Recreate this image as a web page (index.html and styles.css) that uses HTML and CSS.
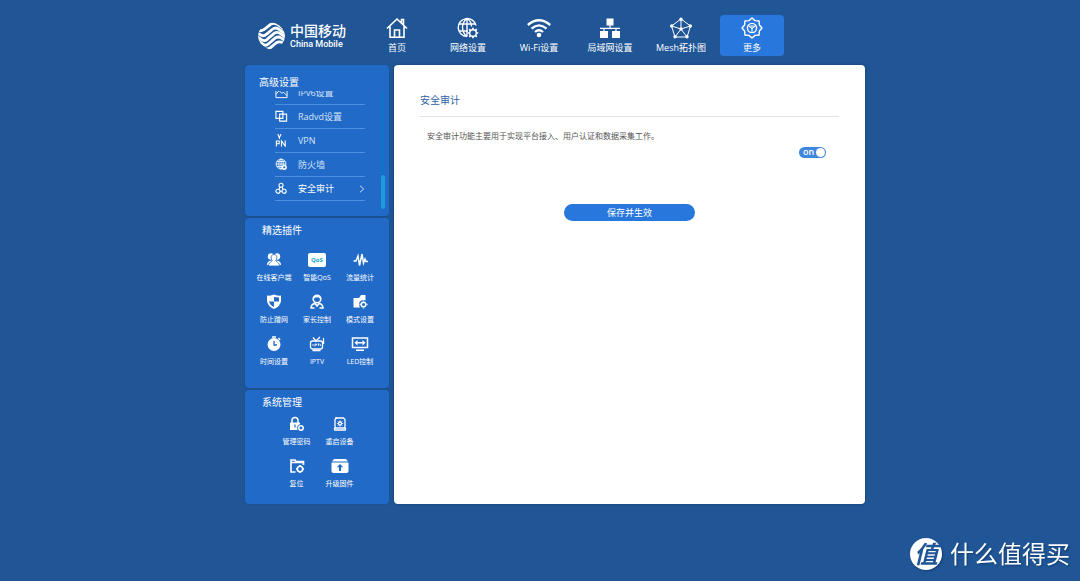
FILE: index.html
```html
<!DOCTYPE html>
<html lang="zh-CN">
<head>
<meta charset="utf-8">
<meta name="viewport" content="width=device-width, initial-scale=1">
<title>安全审计</title>
<link rel="stylesheet" href="styles.css">
</head>
<body>
<div class="page">
  <header class="header">
    <a class="brand" href="#">
      <svg class="brand-mark" viewBox="0 0 28 28" aria-hidden="true">
        <clipPath id="mark"><path d="M14 0Q18 0 22 3L25 6Q28 10 28 14T25 22L22 25Q18 28 14 28T6 25L3 22Q0 18 0 14T3 6L6 3Q10 0 14 0Z"/></clipPath>
        <g clip-path="url(#mark)" fill="none" stroke="#fff" stroke-width="2.900">
          <path d="M-2 7L2 8.500Q5 9 8 6L13 2Q17-.500 21 2.500L30 9"/>
          <path d="M-2 10L3 13Q6 15 9 12L15 7Q19 4 23 8L30 13"/>
          <path d="M-2 14L4 18Q7 20 10 17L17 11Q20 9 24 12L30 16.500"/>
          <path d="M-2 17.500L5 22.500Q8 25 11 22L18 16Q21 14 24 16L30 20"/>
          <path d="M1 24Q9 30 13 26L19 21Q22 19 26 21L30 24"/>
        </g>
      </svg>
      <span class="brand-text"><span class="brand-cn">中国移动</span><span class="brand-en">China Mobile</span></span>
    </a>
    <nav class="nav">
      <a class="nav-item" href="#">
        <svg class="nav-icon" viewBox="0 0 22 22" fill="none" stroke="#fff" stroke-width="1.600"><path d="M1 11.500L11 2l10 9.500M4 9.500V20.200h14V9.500M8.500 20v-7h5v7M15.500 5.500V2.500h2v5"/></svg>
        <span>首页</span>
      </a>
      <a class="nav-item" href="#">
        <svg class="nav-icon" viewBox="0 0 22 22" fill="none" stroke="#fff" stroke-width="1.400"><path d="M19 8.500A9 9 0 1 0 10 19.500M10 1.500C4 6 4 15 10 19.500M10 1.500v18M10 1.500c3 2 4.500 5 4.500 8M2 7h16.500M2 14h9"/><circle cx="16" cy="16" r="3.300"/><path d="M16 10.700v2M16 19.300v2M10.700 16h2M19.300 16h2M12.200 12.200l1.400 1.400M18.400 18.400l1.400 1.400M19.800 12.200l-1.400 1.400M13.600 18.400l-1.400 1.400" stroke-width="1.700"/></svg>
        <span>网络设置</span>
      </a>
      <a class="nav-item" href="#">
        <svg class="nav-icon wifi" viewBox="0 0 24 22" fill="none" stroke="#fff" stroke-width="2.300"><path d="M.800 8Q12-1.500 23.200 8M4.500 11.700Q12 5 19.500 11.700M8 15Q12 11.500 16 15"/><circle cx="12" cy="18" r="2.300" fill="#fff" stroke="none"/></svg>
        <span>Wi-Fi设置</span>
      </a>
      <a class="nav-item" href="#">
        <svg class="nav-icon" viewBox="0 0 22 22" fill="#fff"><path d="M7.500 1.500h7v7h-7zM1 14h8v7H1zM13 14h8v7h-8zM10.400 8.500h1.200v2.200H21v1.200h-3.400V14h-1.200v-2.100H5.600V14H4.400v-2.100H1v-1.200h9.400z"/></svg>
        <span>局域网设置</span>
      </a>
      <a class="nav-item" href="#">
        <svg class="nav-icon" viewBox="0 0 22 22" fill="none" stroke="#fff"><path d="M11 2L20.500 9L17 20H5L1.500 9ZM11 12V2M11 12L20.500 9M11 12L17 20M11 12L5 20M11 12L1.500 9"/><g fill="#fff" stroke="none"><circle cx="11" cy="2.200" r="1.700"/><circle cx="20.300" cy="9" r="1.700"/><circle cx="17" cy="19.800" r="1.700"/><circle cx="5" cy="19.800" r="1.700"/><circle cx="1.700" cy="9" r="1.700"/><circle cx="11" cy="12" r="1.700"/></g></svg>
        <span>Mesh拓扑图</span>
      </a>
      <a class="nav-item active" href="#" aria-current="page">
        <svg class="nav-icon" viewBox="0 0 22 22" fill="none" stroke="#fff" stroke-width="1.400" stroke-linejoin="round"><path d="M11 1L14.060 3.600 18.070 3.930 18.400 7.940 21 11 18.400 14.060 18.070 18.070 14.060 18.400 11 21 7.940 18.400 3.930 18.070 3.600 14.060 1 11 3.600 7.940 3.930 3.930 7.940 3.600Z"/><circle cx="11" cy="11" r="4.600"/><path d="M7.500 9h7L11 11.500zM11 11v4M9 9.500l2 2 2-2" stroke-width="1"/></svg>
        <span>更多</span>
      </a>
    </nav>
  </header>

  <div class="layout">
    <aside class="sidebar">
      <section class="panel settings">
        <h2 class="panel-title">高级设置</h2>
        <div class="scroller">
          <ul class="menu">
            <li><a class="menu-item" href="#"><svg class="menu-icon" viewBox="0 0 14 14" fill="none" stroke="#fff"><path d="M1 2h12v10.500H1zM1 9l3.500-4 3 3L9 6.500l4 4"/></svg><span>IPv6设置</span></a></li>
            <li><a class="menu-item" href="#"><svg class="menu-icon" viewBox="0 0 14 14" fill="none" stroke="#fff" stroke-width="1.200"><path d="M1 1.500h7.500V9H1zM5 4.500h7.500V12H5z"/></svg><span>Radvd设置</span></a></li>
            <li><a class="menu-item" href="#"><svg class="menu-icon" viewBox="0 0 14 14" fill="none" stroke="#fff" stroke-width="1.200"><path d="M3 0l1.700 4L6.500 0M4.700 4v1.500M1.500 13.500V7.500H4.500v3H1.500M7 13.500V7.500l4 5.500V7"/></svg><span>VPN</span></a></li>
            <li><a class="menu-item" href="#"><svg class="menu-icon" viewBox="0 0 14 14" fill="none" stroke="#fff" stroke-width=".9"><circle cx="6.500" cy="6.500" r="5.300"/><ellipse cx="6.500" cy="6.500" rx="2.400" ry="5.300"/><path d="M1.200 6.500h10.600M2 3.800h9M2 9.200h6M6.500 1v11"/><circle cx="10" cy="10" r="2" fill="#216ac8" stroke-width="1.600"/></svg><span>防火墙</span></a></li>
            <li><a class="menu-item current" href="#" aria-current="page"><svg class="menu-icon" viewBox="0 0 14 14" fill="none" stroke="#fff" stroke-width="1.200"><circle cx="6.500" cy="3.500" r="2.200"/><circle cx="3.200" cy="10" r="2.200"/><circle cx="9.800" cy="10" r="2.200"/><path d="M5.500 5.500L4 8M7.500 5.500L9 8M5.400 10h2.200"/></svg><span>安全审计</span><svg class="chevron" viewBox="0 0 6 8" fill="none" stroke="#cfe0f7"><path d="M1 .700L4.700 4 1 7.300"/></svg></a></li>
          </ul>
          <div class="track"><div class="thumb"></div></div>
        </div>
      </section>

      <section class="panel plugins">
        <h2 class="panel-title indent">精选插件</h2>
        <div class="tiles three">
          <a class="tile" href="#"><svg class="tile-icon" viewBox="0 0 18 18"><g fill="#fff"><circle cx="6" cy="5.500" r="3.200"/><circle cx="12" cy="5.500" r="3.200"/><path d="M2 14q0-4 4-4.500h6q4 .500 4 4.500z"/></g><path d="M9 3.500c4 0 3 4.800 1.800 6 .200 1.500 3.700 1.500 3.700 5.500h-11c0-4 3.500-4 3.700-5.500C6 8.300 5 3.500 9 3.500z" fill="#fff" stroke="#216ac8" stroke-width=".8"/></svg><span>在线客户端</span></a>
          <a class="tile" href="#"><svg class="tile-icon" viewBox="0 0 18 18"><rect y="2" width="18" height="14" rx="2" fill="#fff"/><text class="qos" x="9" y="11" text-anchor="middle">QoS</text></svg><span>智能QoS</span></a>
          <a class="tile" href="#"><svg class="tile-icon" viewBox="0 0 18 18" fill="none" stroke="#fff" stroke-width="1.500"><path d="M2.500 10H5L7 5l1.500 9.500L11 3l1.500 9L14 8l1 2.500h2"/></svg><span>流量统计</span></a>
          <a class="tile" href="#"><svg class="tile-icon" viewBox="0 0 18 18"><path d="M2 2.500Q6 3 9 1.500 12 3 16 2.500V8Q15.500 13 9 16 2.500 13 2 8Z" fill="#fff"/><path d="M9 8.500V4L14 4.500V8.500zM9 8.500H4Q5 12 9 14z" fill="#216ac8"/></svg><span>防止蹭网</span></a>
          <a class="tile" href="#"><svg class="tile-icon" viewBox="0 0 18 18" fill="none" stroke="#fff" stroke-width="1.600"><circle cx="9" cy="6" r="3.800"/><path d="M5.500 5Q9 2 12.500 5M3 15.500Q3 11 7 10.500L9 13l2-2.500q4 .500 4 5M2.500 15h4M11.500 15h4"/></svg><span>家长控制</span></a>
          <a class="tile" href="#"><svg class="tile-icon" viewBox="0 0 18 18"><path d="M2.500 5H8l2-3h4.500v12.500h-12z" fill="#fff"/><circle cx="12.500" cy="11.500" r="4.500" fill="#216ac8"/><circle cx="12.500" cy="11.500" r="2.300" fill="none" stroke="#fff" stroke-width="1.500"/><path d="M12.500 7.500v1M12.500 14.500v1M8.500 11.500h1M15.500 11.500h1" stroke="#fff" stroke-width="1.400"/></svg><span>模式设置</span></a>
          <a class="tile" href="#"><svg class="tile-icon" viewBox="0 0 18 18"><circle cx="9" cy="9.500" r="6.500" fill="#fff"/><path d="M7 2h4M13.500 3l1.500 2" stroke="#fff" stroke-width="1.600"/><path d="M9 6v4h3" fill="none" stroke="#216ac8" stroke-width="1.300"/></svg><span>时间设置</span></a>
          <a class="tile" href="#"><svg class="tile-icon" viewBox="0 0 18 18" fill="none" stroke="#fff" stroke-width="1.300"><rect x="2.500" y="6" width="12" height="8" rx="2"/><path d="M5 2.500L8 6l4-4M15.500 3v6M4.500 15.500h8"/><path d="M5 9v2M7 11.500V9h1.500v1H7M9.500 9h2M10.500 9v2M12 9l.800 2" stroke-width=".8"/></svg><span>IPTV</span></a>
          <a class="tile" href="#"><svg class="tile-icon" viewBox="0 0 18 18" fill="none" stroke="#fff" stroke-width="1.500"><path d="M1.500 3h15v9.500h-15zM5 15.200h8M5 7.700h8"/><path d="M3.500 7.700L6.500 5v5.400zM14.500 7.700l-3-2.700v5.400z" fill="#fff" stroke="none"/></svg><span>LED控制</span></a>
        </div>
      </section>

      <section class="panel system">
        <h2 class="panel-title indent">系统管理</h2>
        <div class="tiles two">
          <a class="tile" href="#"><svg class="tile-icon" viewBox="0 0 18 18"><rect x="2" y="7.500" width="10" height="7.500" fill="#fff"/><path d="M4 8V5.500a3 3 0 0 1 6 0V8" fill="none" stroke="#fff" stroke-width="1.500"/><path d="M7 9.500v3" stroke="#216ac8" stroke-width="1.200"/><circle cx="13" cy="13" r="3.800" fill="#216ac8"/><circle cx="13" cy="13" r="2.200" fill="none" stroke="#fff" stroke-width="1.500"/></svg><span>管理密码</span></a>
          <a class="tile" href="#"><svg class="tile-icon" viewBox="0 0 18 18" fill="none" stroke="#fff" stroke-width="1.300"><path d="M5.500 3h7l1.500 1.500V13H4V4.500zM3 15h12"/><circle cx="9" cy="8.500" r="1.500"/><path d="M9 5.300v1.700M9 10v1.700M5.800 8.500h1.700M10.500 8.500h1.700M6.800 6.300l1 1M11.200 6.300l-1 1M6.800 10.700l1-1M11.200 10.700l-1-1" stroke-width=".8"/><path d="M4 3h2M3.500 13v1.500M14.500 13v1.500"/></svg><span>重启设备</span></a>
          <a class="tile" href="#"><svg class="tile-icon" viewBox="0 0 18 18" fill="none" stroke="#fff" stroke-width="1.600"><path d="M7.500 15H3V3h4l1 1.500h7.500V8M3 5.500h12.500"/><circle cx="12" cy="12" r="2.700"/><path d="M12 8v1.200M12 14.800v1.200M8 12h1M15 12h1"/></svg><span>复位</span></a>
          <a class="tile" href="#"><svg class="tile-icon" viewBox="0 0 18 18"><path d="M3 2h12L17 4.500H1zM.500 5.500h17V14q0 2-2 2h-13q-2 0-2-2z" fill="#fff"/><path d="M9 7l3.200 3.300H10V14H8v-3.700H5.800z" fill="#216ac8"/></svg><span>升级固件</span></a>
        </div>
      </section>
    </aside>

    <main class="content">
      <h1 class="content-title">安全审计</h1>
      <form class="audit">
        <label class="description" for="audit-switch">安全审计功能主要用于实现平台接入、用户认证和数据采集工作。</label>
        <span class="switch"><input class="switch-input" type="checkbox" id="audit-switch" checked><span class="switch-text" aria-hidden="true">on</span></span>
        <button class="save" type="button">保存并生效</button>
      </form>
    </main>
  </div>
</div>

<div class="watermark">
  <span class="watermark-badge">值</span>
  <span>什么值得买</span>
</div>
</body>
</html>
```
FILE: styles.css
```css
* {
  box-sizing: border-box;
}

body {
  margin: 0;
  min-height: 100vh;
  background: #205696;
  color: #fff;
  font-family: "Open Sans", "Noto Sans CJK SC", sans-serif;
  font-size: 9px;
  line-height: 12px;
}

a {
  color: inherit;
  text-decoration: none;
}

h1,
h2,
ul {
  margin: 0;
  padding: 0;
  font-weight: 400;
  list-style: none;
}

svg {
  display: block;
  flex: none;
}

.page {
  max-width: 650px;
  margin: 0 auto;
  padding: 0 0 24px 30px;
}

/* Header */
.header {
  display: flex;
  justify-content: space-between;
  padding: 15px 81px 9px 13px;
}

.brand {
  display: flex;
  align-items: center;
  gap: 5px;
}

.brand-mark {
  width: 27px;
  height: 28px;
}

.brand-text {
  display: flex;
  flex-direction: column;
}

.brand-cn {
  font-size: 14px;
  font-weight: 500;
  line-height: 16px;
}

.brand-en {
  font-family: Roboto, sans-serif;
  font-size: 9px;
  font-weight: 500;
  line-height: 10px;
}

.nav {
  display: flex;
  gap: 7px;
}

.nav-item {
  display: flex;
  flex-direction: column;
  align-items: center;
  gap: 3px;
  width: 64px;
  padding: 2px 0;
  border-radius: 4px;
  white-space: nowrap;
}

.nav-item.active {
  background: #2777dc;
}

.nav-icon {
  width: 22px;
  height: 22px;
}

.nav-icon.wifi {
  width: 24px;
}

/* Layout */
.layout {
  display: flex;
  gap: 5px;
}

.sidebar {
  display: flex;
  flex: none;
  flex-direction: column;
  gap: 2px;
  width: 144px;
}

.panel {
  border-radius: 4px;
  background: #216ac8;
  box-shadow: 0 0 2px #184a86;
}

.panel-title {
  padding-left: 14px;
  font-size: 10px;
  line-height: 14px;
}

.panel-title.indent {
  padding-left: 17px;
}

/* Settings list */
.settings {
  padding: 10px 4px 7px 0;
}

.scroller {
  display: flex;
  justify-content: space-between;
  height: 118px;
  margin-top: 2px;
  padding-left: 30px;
  overflow: hidden;
}

.menu {
  display: flex;
  flex-direction: column;
  justify-content: flex-end;
  width: 90px;
  padding-bottom: 8px;
}

.menu-item {
  display: flex;
  align-items: center;
  gap: 10px;
  height: 24px;
  border-bottom: 1px solid #4c8ee0;
  color: #d3e2f7;
}

.menu-item.current {
  color: #fff;
}

.menu-icon {
  width: 13px;
  height: 13px;
}

.chevron {
  width: 6px;
  height: 8px;
  margin-left: auto;
}

.track {
  display: flex;
  align-items: flex-end;
  width: 4px;
  background: linear-gradient(90deg, transparent 1px, #0975c5 1px, #0975c5 3px, transparent 3px);
}

.thumb {
  width: 4px;
  height: 34px;
  border-radius: 2px;
  background: #1e9bdc;
}

/* Icon grids */
.plugins {
  padding: 5px 0 21px;
}

.system {
  padding: 5px 0 15px;
}

.tiles {
  display: grid;
  justify-content: center;
  row-gap: 10px;
}

.three {
  grid-template-columns: repeat(3, 43px);
  margin-top: 14px;
}

.two {
  grid-template-columns: repeat(2, 43px);
  margin-top: 6px;
  padding-left: 2px;
}

.tile {
  display: flex;
  flex-direction: column;
  align-items: center;
  gap: 4px;
  font-size: 7px;
  line-height: 10px;
  white-space: nowrap;
}

.tile-icon {
  width: 18px;
  height: 18px;
}

.qos {
  fill: #16a6d0;
  font-size: 6px;
  font-weight: 700;
}

/* Content */
.content {
  flex: 1;
  padding: 28px 26px;
  border-radius: 4px;
  background: #fff;
  box-shadow: 0 0 3px #123c70;
  color: #555;
}

.content-title {
  padding-bottom: 9px;
  border-bottom: 1px solid #e3e3e3;
  color: #2e62a6;
  font-size: 10px;
  line-height: 14px;
}

.audit {
  display: flex;
  flex-direction: column;
  padding: 13px 13px 0 7px;
}

.description {
  font-size: 8px;
}

.switch {
  display: grid;
  align-self: flex-end;
  margin-top: 5px;
}

.switch-input {
  display: flex;
  grid-area: 1 / 1;
  align-items: center;
  justify-content: flex-end;
  appearance: none;
  width: 27px;
  height: 11px;
  margin: 0;
  padding: 1px;
  border-radius: 6px;
  background: #3f86de;
}

.switch-input::after {
  width: 9px;
  height: 9px;
  border-radius: 50%;
  background: #fff;
  content: "";
}

.switch-text {
  grid-area: 1 / 1;
  padding-left: 4px;
  color: #fff;
  font-weight: 600;
  line-height: 10px;
  pointer-events: none;
}

.save {
  align-self: center;
  width: 131px;
  height: 17px;
  margin: 46px 0 0 6px;
  padding: 0;
  border: 0;
  border-radius: 9px;
  background: #2777dc;
  color: #fff;
  font: inherit;
}

/* Watermark */
.watermark {
  position: fixed;
  right: 10px;
  bottom: 11px;
  display: flex;
  align-items: center;
  gap: 8px;
  font-size: 24px;
  line-height: 32px;
  text-shadow: 1px 1px 2px #123c70;
}

.watermark-badge {
  width: 32px;
  border-radius: 50%;
  background: #fff;
  box-shadow: 1px 1px 2px #123c70;
  color: #205696;
  font-style: italic;
  font-weight: 700;
  text-align: center;
  text-shadow: none;
}
```
